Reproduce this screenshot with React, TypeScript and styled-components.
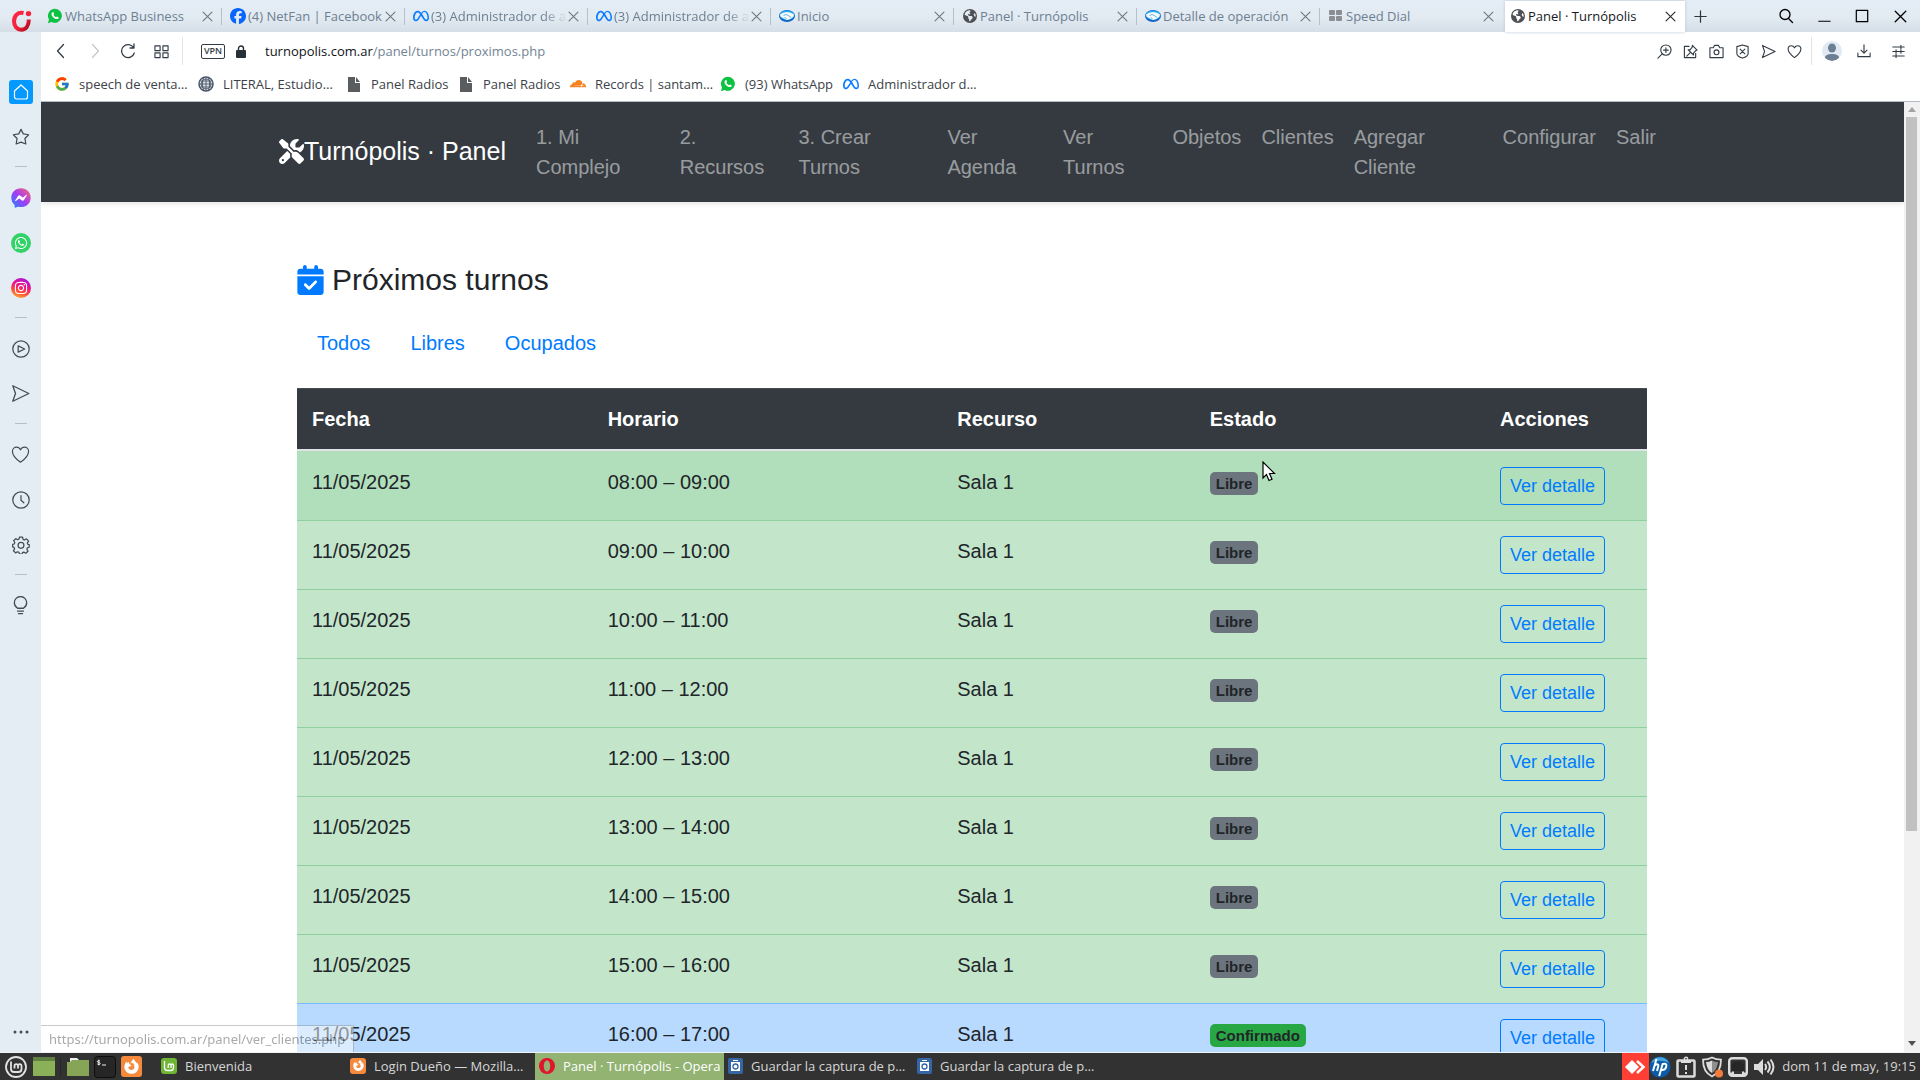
import React from "react";
import styled, { createGlobalStyle, css } from "styled-components";
import {
  FaScrewdriverWrench,
  FaCalendarCheck,
  FaMeta,
  FaFacebook,
  FaFacebookMessenger,
  FaWhatsapp,
  FaInstagram,
  FaCloudflare,
  FaFirefoxBrowser,
  FaEarthAmericas,
} from "react-icons/fa6";
import { FcGoogle } from "react-icons/fc";

const uiFont = `"Open Sans", "Noto Sans", sans-serif`;
const pageFont = `"Liberation Sans", Arial, sans-serif`;

const GlobalStyle = createGlobalStyle`
  *, *::before, *::after { box-sizing: border-box; }
  body { margin: 0; background: #e4ecf4; overflow: hidden; }
  a { text-decoration: none; }
  button { font: inherit; border: 0; padding: 0; background: none; cursor: pointer; }
  svg { display: block; flex: none; }
`;

const Desktop = styled.div`
  display: flex;
  flex-direction: column;
  height: 100vh;
  font-family: ${uiFont};
  font-size: 13px;
`;

/* ---------- tab strip ---------- */

const TabStrip = styled.header`
  display: flex;
  flex: none;
  height: 32px;
  background: linear-gradient(#e4ecf5 0%, #e2eaf2 55%, #d5dde6 100%);
`;

const MenuButton = styled.button`
  display: flex;
  width: 39px;
  height: 42px;
  flex: none;
  align-items: center;
  justify-content: center;
  padding-left: 4px;
`;

const TabList = styled.div`
  display: flex;
  flex: 1;
  min-width: 0;
`;

const Tab = styled.div<{ $active?: boolean }>`
  display: flex;
  flex: 0 1 183px;
  min-width: 0;
  align-items: center;
  padding: 0 9px 0 8px;
  color: ${(p) => (p.$active ? "#16191d" : "#6d8091")};
  position: relative;

  ${(p) =>
    p.$active
      ? css`
          background: #fff;
          flex-basis: 180px;
          margin: 1px 0 0 2px;
          padding-left: 5px;
          box-shadow: 0 0 3px #b9c7d8;
        `
      : css`
          &:not(:nth-last-child(3))::after {
            content: "";
            position: absolute;
            right: 0;
            top: 8px;
            height: 17px;
            width: 1px;
            background: #b4c0cc;
          }
        `}
`;

const TabLabel = styled.button<{ $fade?: boolean }>`
  flex: 1;
  min-width: 0;
  overflow: hidden;
  display: flex;
  align-items: center;
  gap: 2px;
  padding-bottom: 1px;
  text-align: left;
  white-space: nowrap;
  color: inherit;
  line-height: 20px;
  ${(p) => p.$fade && "mask-image: linear-gradient(90deg, #000 84%, transparent);"}
`;

const CloseButton = styled.button<{ $dark?: boolean }>`
  color: ${(p) => (p.$dark ? "#22272d" : "#6f7780")};
`;

const NewTab = styled.button`
  width: 30px;
  display: flex;
  align-items: center;
  justify-content: center;
  color: #30363d;
`;

const WindowControls = styled.div`
  display: flex;
  align-items: center;
  padding-right: 1px;
  color: #30363d;

  button {
    width: 38px;
    height: 32px;
    display: flex;
    align-items: center;
    justify-content: center;
  }
`;

/* ---------- browser body ---------- */

const BrowserBody = styled.div`
  display: flex;
  flex: 1;
  min-height: 0;
  border-bottom: 1px solid #eef2f6;
`;

const Sidebar = styled.nav`
  display: flex;
  flex-direction: column;
  align-items: center;
  flex: none;
  width: 41px;
  padding-top: 37px;
  background: #e4ecf4;
  color: #434b55;
`;

const SideButton = styled.button`
  display: flex;
  align-items: center;
  justify-content: center;
  width: 41px;
  height: 45px;
  color: inherit;
`;

const SideRule = styled.hr`
  width: 12px;
  height: 1px;
  border: 0;
  margin: 7px 0 8px;
  background: #b3bfcb;
`;

const SideTile = styled.span<{ $bg: string; $round?: boolean }>`
  display: flex;
  align-items: center;
  justify-content: center;
  width: ${(p) => (p.$round ? 20 : 24)}px;
  height: ${(p) => (p.$round ? 20 : 24)}px;
  border-radius: ${(p) => (p.$round ? "50%" : "3px")};
  background: ${(p) => p.$bg};
  color: #fff;
`;

const SideMore = styled(SideButton)`
  margin-top: auto;
  height: 40px;
`;

const Main = styled.div`
  display: flex;
  flex-direction: column;
  flex: 1;
  min-width: 0;
  background: #fff;
`;

const AddressRow = styled.div`
  display: flex;
  flex: none;
  align-items: center;
  height: 38px;
  padding: 0 4px 0 2px;
  color: #333c46;
`;

const ToolButton = styled.button<{ $w: number; $muted?: boolean }>`
  display: flex;
  align-items: center;
  justify-content: center;
  width: ${(p) => p.$w}px;
  height: 32px;
  color: ${(p) => (p.$muted ? "#c3c9cf" : "inherit")};
`;

const Divider = styled.span`
  width: 1px;
  height: 28px;
  background: #e1e4e8;
`;

const Vpn = styled.button`
  margin-left: 18px;
  width: 24px;
  height: 15px;
  border: 1px solid #333c46;
  border-radius: 2px;
  font-size: 9px;
  line-height: 12px;
  font-weight: 600;
  color: #333c46;
`;

const AddressField = styled.div`
  flex: 1;
  margin-left: 9px;
  padding-bottom: 1px;
  line-height: 20px;
  color: #738495;
  outline: none;

  b {
    font-weight: 400;
    color: #101418;
  }
`;

const Avatar = styled.button`
  width: 20px;
  height: 20px;
  margin: 0 6px 0 10px;
  border-radius: 50%;
  background: #e1eaf3;
  overflow: hidden;
`;

const Bookmarks = styled.nav`
  display: flex;
  flex: none;
  height: 32px;
  padding: 0 0 3px 13px;
  border-bottom: 1px solid #b3bcc6;
`;

const Bookmark = styled.a<{ $w: number }>`
  display: flex;
  align-items: center;
  gap: 9px;
  width: ${(p) => p.$w}px;
  white-space: nowrap;
  color: #3c4248;
`;

const IconBox = styled.span`
  display: flex;
  width: 16px;
  flex: none;
  justify-content: center;
`;

const Viewport = styled.div`
  display: flex;
  flex: 1;
  min-height: 0;
  position: relative;
`;

const Scrollbar = styled.div`
  flex: none;
  width: 16px;
  display: flex;
  flex-direction: column;
  align-items: center;
  padding: 5px 1px 6px 0;
  background: #f1f1f1;
`;

const Track = styled.div`
  flex: 1;
  align-self: stretch;
  margin: 5px 2px 8px;
`;

const Thumb = styled.div`
  height: 78%;
  background: #c1c1c1;
`;

const StatusBubble = styled.div`
  position: absolute;
  left: 0;
  bottom: 0;
  height: 27px;
  padding: 0 8px;
  border: 1px solid #8f959c;
  border-width: 1px 1px 0 0;
  background: #fff;
  color: #555;
  font-family: "Noto Sans", "Open Sans", sans-serif;
  font-size: 13px;
  line-height: 26px;
  opacity: 0.5;
`;

const Cursor = styled.svg`
  position: absolute;
  left: 1221px;
  top: 359px;
`;

/* ---------- web page ---------- */

const Page = styled.div`
  flex: 1;
  min-width: 0;
  overflow: hidden;
  font-family: ${pageFont};
  font-size: 20px;
  line-height: 30px;
  color: #212529;
`;

const Navbar = styled.nav`
  background: #343a40;
  padding: 10px 0;
  box-shadow: 0 2px 5px rgba(0, 0, 0, 0.1);
`;

const NavContainer = styled.div`
  display: flex;
  align-items: center;
  max-width: 1425px;
  margin: 0 auto;
  padding: 0 19px;
`;

const Brand = styled.a`
  display: flex;
  align-items: center;
  flex: none;
  margin-right: 20px;
  padding-bottom: 2px;
  color: #fff;
  font-size: 25px;
  line-height: 38px;
`;

const NavList = styled.ul`
  display: flex;
  flex: 1;
  min-width: 0;
  margin: 0;
  padding: 0;
  list-style: none;
`;

const NavLink = styled.a`
  display: block;
  padding: 10px;
  color: rgba(255, 255, 255, 0.5);
`;

const Content = styled.main`
  max-width: 1425px;
  margin: 0 auto;
  padding: 60px 38px 0 37px;
`;

const Title = styled.h4`
  display: flex;
  align-items: center;
  gap: 8px;
  margin: 0 0 20px;
  font-size: 30px;
  line-height: 36px;
  font-weight: 400;

  svg {
    width: 27px;
    height: 30px;
    color: #007bff;
  }
`;

const Filters = styled.div`
  display: flex;
  margin-bottom: 20px;

  a {
    padding: 10px 20px;
    color: #007bff;
  }
`;

const Table = styled.table`
  width: 100%;
  table-layout: fixed;
  border-collapse: separate;
  border-spacing: 0;
`;

const Col = styled.col<{ $w: number }>`
  width: ${(p) => p.$w}%;
`;

const HeadCell = styled.th`
  padding: 15px;
  text-align: left;
  color: #fff;
  background: #343a40;
  border-top: 1px solid #454d55;
  border-bottom: 2px solid #dee2e6;
`;

type Tone = "hover" | "free" | "taken";
const tones: Record<Tone, { bg: string; line: string }> = {
  hover: { bg: "#b1dfbb", line: "#b1dfbb" },
  free: { bg: "#c3e6cb", line: "#8fd19e" },
  taken: { bg: "#b8daff", line: "#7abaff" },
};

const Row = styled.tr<{ $tone: Tone }>`
  background: ${(p) => tones[p.$tone].bg};

  td {
    padding: 15px;
    vertical-align: top;
    border-top: 1px solid ${(p) => tones[p.$tone].line};
  }
`;

const Badge = styled.span<{ $ok?: boolean }>`
  display: inline-block;
  padding: 4px 6px;
  border-radius: 5px;
  font-size: 15px;
  line-height: 15px;
  font-weight: 700;
  background: ${(p) => (p.$ok ? "#28a745" : "#6c757d")};
`;

const DetailLink = styled.a`
  display: inline-block;
  vertical-align: middle;
  padding: 5px 9px;
  border: 1px solid #007bff;
  border-radius: 4px;
  font-size: 18px;
  line-height: 26px;
  white-space: nowrap;
  color: #007bff;
`;

/* ---------- desktop panel ---------- */

const Taskbar = styled.footer`
  display: flex;
  flex: none;
  align-items: center;
  height: 27px;
  background: #323232;
  color: #d6d6d6;
`;

const Launchers = styled.div`
  display: flex;
  align-items: center;
  gap: 5px;
  width: 157px;
  padding-left: 4px;
`;

const LauncherGap = styled.span`
  width: 1px;
  height: 18px;
  margin: 0 1px 0 0;
  background: #262626;
`;

const TaskButton = styled.button<{ $active?: boolean }>`
  display: flex;
  align-items: center;
  gap: 8px;
  flex: 0 1 189px;
  min-width: 0;
  height: 27px;
  padding: 0 0 2px 4px;
  white-space: nowrap;
  color: ${(p) => (p.$active ? "#fff" : "inherit")};
  background: ${(p) => (p.$active ? "#92b372" : "transparent")};
`;

const Tray = styled.div`
  display: flex;
  align-items: center;
  gap: 4px;
  margin-left: auto;
  padding-right: 4px;
`;

const AnyDesk = styled.button`
  display: flex;
  align-items: center;
  justify-content: center;
  width: 27px;
  height: 27px;
  margin-right: -4px;
  background: #ff3f34;
`;

const Clock = styled.time`
  margin-left: 3px;
  padding-bottom: 2px;
`;

/* ---------- drawings ---------- */

type LineProps = { size?: number; w?: number; children: React.ReactNode };
const Line = ({ size = 16, w = 1, children }: LineProps) => (
  <svg
    width={size}
    height={size}
    viewBox="0 0 16 16"
    fill="none"
    stroke="currentColor"
    strokeWidth={w}
    strokeLinecap="round"
    strokeLinejoin="round"
    aria-hidden="true"
  >
    {children}
  </svg>
);

const Cross = ({ size = 11 }: { size?: number }) => (
  <Line size={size} w={1.6}>
    <path d="M1.5 1.5l13 13M14.5 1.5l-13 13" />
  </Line>
);

const HeartPath = <path d="M8 14.500C4.500 12 1.200 9 1.200 5.400 1.200 3.200 2.800 1.800 4.600 1.800 6.200 1.800 7.400 2.800 8 4.100 8.600 2.800 9.800 1.800 11.400 1.800c1.800 0 3.400 1.400 3.400 3.600C14.800 9 11.500 12 8 14.500z" />;
const SendPath = <path d="M1.500 1.500l13.500 6.500-13.500 6.500L3.800 8z" />;

const OperaMark = () => (
  <svg width="21" height="22" viewBox="0 0 21 22" fill="none" aria-hidden="true">
    <defs>
      <linearGradient id="opera" x1="0" y1="0" x2="1" y2="1">
        <stop offset="0" stopColor="#ff2a45" />
        <stop offset="0.6" stopColor="#f01f38" />
        <stop offset="1" stopColor="#a5081c" />
      </linearGradient>
    </defs>
    <path d="M12.500 3C6.500 1.800 3 6 3 11.300c0 5 3.200 8.400 7.200 8.400 4.600 0 7.600-3.600 7.600-10.200" stroke="url(#opera)" strokeWidth="4" />
    <circle cx="17.500" cy="3.600" r="2.700" fill="#f5243d" />
  </svg>
);

const WhatsBubble = () => (
  <svg width="16" height="16" viewBox="0 0 16 16" aria-hidden="true">
    <path d="M8 .800a7 7 0 1 1-3.400 13.200L.900 15.200l1.100-3.700A7 7 0 0 1 8 .800z" fill="#0dc143" />
    <path d="M5.600 4.200c.5-.3.900 0 1.100.6l.4 1-.6.900c.5 1.200 1.400 2 2.600 2.500l.900-.8 1.600.8c.3 1.200-.7 2-1.800 1.900C7 10.900 4.600 8.400 4.500 6c0-.8.500-1.500 1.100-1.800z" fill="#fff" />
  </svg>
);

const Handshake = () => (
  <svg width="16" height="14" viewBox="0 0 16 14" aria-hidden="true">
    <ellipse cx="8" cy="7" rx="8" ry="6" fill="#1565c8" />
    <ellipse cx="8" cy="6.200" rx="7.400" ry="4.800" fill="#22a7f2" />
    <path d="M1 5.500l3-1.800 4-.7 4 .8 3 1.700-.6 2.200-3 2.300L8 11 4.600 9.600 1.500 7.500z" fill="#f4fafd" />
    <path d="M4.500 6.500l2.500-1 2 .8 3 2.200M5.500 8.500l2 1" stroke="#6db4e2" fill="none" />
  </svg>
);

const Tiles = () => (
  <svg width="14" height="12" viewBox="0 0 14 12" fill="#8b8f94" aria-hidden="true">
    <rect width="6" height="5" rx="1" />
    <rect x="7" width="6" height="5" rx="1" />
    <rect y="6" width="6" height="5" rx="1" />
    <rect x="7" y="6" width="6" height="5" rx="1" />
  </svg>
);

const PageSheet = () => (
  <svg width="13" height="15" viewBox="0 0 13 15" fill="#5a5d60" aria-hidden="true">
    <path d="M0 0h7v6h5v9H0zM8 0l4 5H8z" />
  </svg>
);

const Globe = () => (
  <svg width="16" height="16" viewBox="0 0 16 16" fill="none" stroke="#4a5568" aria-hidden="true">
    <circle cx="8" cy="8" r="7" strokeWidth="1.500" />
    <circle cx="8" cy="8" r="5" fill="#dfe4ec" />
    <path d="M8 1v14M1 8h14M2.500 5h11M2.500 11h11M5.500 2c-1.500 4-1.500 8 0 12M10.500 2c1.500 4 1.500 8 0 12" strokeWidth="0.900" />
  </svg>
);

const Person = () => (
  <svg width="20" height="20" viewBox="0 0 20 20" fill="#6d7f92" aria-hidden="true">
    <ellipse cx="10" cy="7" rx="4" ry="4.500" />
    <path d="M3 17c0-3 3-4 7-4s7 1 7 4c-2 2-4 3-7 3s-5-1-7-3z" />
  </svg>
);

const MintMenu = () => (
  <svg width="24" height="24" viewBox="0 0 24 24" fill="none" stroke="#e2e2e2" aria-hidden="true">
    <circle cx="12" cy="12" r="10" strokeWidth="1.800" />
    <path d="M7 6.500V14c0 2 1 3 3 3h4.500c2 0 3-1 3-3v-3c0-2.500-3.500-2.500-3.500 0v2.500M14 11c0-2.500-3.500-2.500-3.500 0v2.500" strokeWidth="1.800" />
  </svg>
);

const MintMark = () => (
  <svg width="12" height="12" viewBox="0 0 12 12" fill="none" stroke="#fff" strokeWidth="1.300" aria-hidden="true">
    <path d="M1.500 1v6.500c0 2 1 3 3 3h3c2 0 3-1 3-3V5.500c0-2-2.500-2-2.500 0V8M8 5.500c0-2-2.800-2-2.800 0V8" />
  </svg>
);

const GreenWindow = () => (
  <svg width="22" height="19" viewBox="0 0 22 19" aria-hidden="true">
    <rect width="22" height="19" fill="#8ab158" />
    <rect width="22" height="4" fill="#5f8040" />
  </svg>
);

const Folder = () => (
  <svg width="22" height="20" viewBox="0 0 22 20" aria-hidden="true">
    <path d="M3 1h7l2 2h7v4H3z" fill="#f2f2f2" />
    <path d="M0 5h3l2-2h17v16H0z" fill="#87a556" />
  </svg>
);

const Terminal = () => (
  <svg width="22" height="22" viewBox="0 0 22 22" fill="none" aria-hidden="true">
    <rect x="0.500" y="0.500" width="21" height="21" rx="3" fill="#262626" stroke="#0d0d0d" />
    <path d="M6 5.200c-1-.9-2.600-.6-2.600.4 0 1.300 2.800.7 2.800 2 0 1-1.900 1.300-2.900.3M4.800 3.700v5.600M8 9h4" stroke="#eee" />
  </svg>
);

const AppTile = styled.span<{ $size: number; $bg: string }>`
  display: flex;
  align-items: center;
  justify-content: center;
  flex: none;
  width: ${(p) => p.$size}px;
  height: ${(p) => p.$size}px;
  border-radius: 3px;
  color: #fff;
  background: ${(p) => p.$bg};
`;

const OperaO = () => (
  <svg width="16" height="16" viewBox="0 0 16 16" aria-hidden="true">
    <path fillRule="evenodd" fill="#e0142c" d="M8 0a8 8 0 1 0 0 16A8 8 0 0 0 8 0zm0 2.500c2 0 3.200 2.500 3.200 5.500S10 13.500 8 13.500 4.800 11 4.800 8 6 2.500 8 2.500z" />
  </svg>
);

const Camera = () => (
  <svg width="15" height="16" viewBox="0 0 15 16" aria-hidden="true">
    <rect width="15" height="16" rx="2" fill="#3465a4" />
    <rect x="3" y="4" width="9" height="9" fill="#fff" />
    <rect x="5" y="2" width="5" height="1" fill="#fff" />
    <circle cx="7.500" cy="8.500" r="2.500" fill="none" stroke="#3465a4" strokeWidth="1.300" />
  </svg>
);

const Hp = () => (
  <svg width="22" height="22" viewBox="0 0 22 22" aria-hidden="true">
    <circle cx="11" cy="11" r="10.500" fill="#0a5ba8" />
    <path d="M2 7a10 10 0 0 1 18 0C14 4 8 4 2 7z" fill="#4aa5df" />
    <path d="M7.500 3L4 15M5.800 9.500c2-1.800 4-1.400 3.500.6L8 15M13.800 7.500L10.200 20M13.600 8c3-1 4.300.2 3.600 2.800-.7 2.700-2 3.700-5 3.200" stroke="#fff" strokeWidth="2" fill="none" />
  </svg>
);

const Clipboard = () => (
  <svg width="22" height="22" viewBox="0 0 22 22" fill="none" stroke="#dcdcdc" aria-hidden="true">
    <rect x="2.500" y="4.500" width="17" height="16" rx="1" strokeWidth="2.500" />
    <circle cx="11" cy="3" r="1.700" strokeWidth="1.400" />
    <path d="M6 6h10M11 9v5M11 16v2" strokeWidth="2" />
  </svg>
);

const Shield = () => (
  <svg width="22" height="22" viewBox="0 0 22 22" aria-hidden="true">
    <path d="M11 1.500c3 1.700 6 2.200 9 2.200C20 11 17 17.500 11 20.500 5 17.500 2 11 2 3.700c3 0 6-.5 9-2.200z" fill="none" stroke="#dcdcdc" strokeWidth="1.800" />
    <path d="M11 4.500c-2 1-4 1.500-6 1.500.5 5 2.500 9 6 11z" fill="#dcdcdc" />
    <path d="M11 4.500c2 1 4 1.500 6 1.500-.5 5-2.500 9-6 11z" fill="#8f8f8f" />
    <circle cx="18" cy="17.500" r="4" fill="#f47b3b" />
  </svg>
);

const Network = () => (
  <svg width="22" height="22" viewBox="0 0 22 22" aria-hidden="true">
    <rect x="2.200" y="2.200" width="17.600" height="17.600" rx="3" fill="#323232" stroke="#dcdcdc" strokeWidth="2.400" />
    <path d="M4.500 15V7.500h2v-2h9v2h2V15z" fill="#262626" />
    <path d="M3 17.500h3v-2M19 17.500h-3v-2M4 19h14" stroke="#dcdcdc" strokeWidth="2" fill="none" />
  </svg>
);

const Volume = () => (
  <svg width="22" height="20" viewBox="0 0 22 20" fill="none" stroke="#dcdcdc" strokeWidth="2" aria-hidden="true">
    <path d="M1 7h4l5-5v16l-5-5H1z" fill="#dcdcdc" stroke="none" />
    <path d="M12 7c1.500 2 1.500 4 0 6M14.500 4.500c3 3.500 3 7.500 0 11M17.500 2.500c4 5 4 10 0 15" />
  </svg>
);

/* ---------- data ---------- */

const tabs = [
  { icon: <WhatsBubble />, label: "WhatsApp Business" },
  { icon: <FaFacebook size={16} color="#0866ff" />, label: "(4) NetFan | Facebook" },
  { icon: <FaMeta size={16} color="#0a7cff" />, label: "(3) Administrador de a", fade: true },
  { icon: <FaMeta size={16} color="#0a7cff" />, label: "(3) Administrador de a", fade: true },
  { icon: <Handshake />, label: "Inicio" },
  { icon: <FaEarthAmericas size={14} color="#4d5156" />, label: "Panel · Turnópolis" },
  { icon: <Handshake />, label: "Detalle de operación" },
  { icon: <Tiles />, label: "Speed Dial" },
  { icon: <FaEarthAmericas size={14} color="#4d5156" />, label: "Panel · Turnópolis", active: true },
];

const bookmarks = [
  { icon: <FcGoogle size={16} />, label: "speech de venta…", w: 144 },
  { icon: <Globe />, label: "LITERAL, Estudio…", w: 148 },
  { icon: <PageSheet />, label: "Panel Radios", w: 112 },
  { icon: <PageSheet />, label: "Panel Radios", w: 112 },
  { icon: <FaCloudflare size={16} color="#f6821f" />, label: "Records | santam…", w: 150 },
  { icon: <WhatsBubble />, label: "(93) WhatsApp", w: 123 },
  { icon: <FaMeta size={16} color="#0a7cff" />, label: "Administrador d…", w: 140 },
];

const menu = [
  "1. Mi Complejo",
  "2. Recursos",
  "3. Crear Turnos",
  "Ver Agenda",
  "Ver Turnos",
  "Objetos",
  "Clientes",
  "Agregar Cliente",
  "Configurar",
  "Salir",
];

const columns = [
  { name: "Fecha", w: 21.9 },
  { name: "Horario", w: 25.9 },
  { name: "Recurso", w: 18.7 },
  { name: "Estado", w: 21.5 },
  { name: "Acciones", w: 12 },
];

const pad = (n: number) => String(n).padStart(2, "0");
const slots = Array.from({ length: 9 }, (_, i) => ({
  time: `${pad(8 + i)}:00 – ${pad(9 + i)}:00`,
  tone: (i === 0 ? "hover" : i < 8 ? "free" : "taken") as Tone,
}));

export default function App() {
  return (
    <Desktop>
      <GlobalStyle />
      <TabStrip>
        <MenuButton aria-label="Opera">
          <OperaMark />
        </MenuButton>
        <TabList>
          {tabs.map((t, i) => (
            <Tab key={i} $active={t.active}>
              <TabLabel $fade={t.fade}>
                <IconBox>{t.icon}</IconBox>
                {t.label}
              </TabLabel>
              <CloseButton $dark={t.active} aria-label="Cerrar pestaña">
                <Cross />
              </CloseButton>
            </Tab>
          ))}
          <NewTab aria-label="Nueva pestaña">
            <Line size={13} w={1.5}>
              <path d="M8 1v14M1 8h14" />
            </Line>
          </NewTab>
        </TabList>
        <WindowControls>
          <button aria-label="Buscar">
            <Line w={1.3}>
              <circle cx="7" cy="6.500" r="5" />
              <path d="M10.500 10.500l4 4" />
            </Line>
          </button>
          <button aria-label="Minimizar">
            <Line size={14} w={1.3}>
              <path d="M2 14h13" />
            </Line>
          </button>
          <button aria-label="Maximizar">
            <Line size={14} w={1.4}>
              <path d="M1.500 1.500h13v13h-13z" />
            </Line>
          </button>
          <button aria-label="Cerrar">
            <Cross size={13} />
          </button>
        </WindowControls>
      </TabStrip>

      <BrowserBody>
        <Sidebar aria-label="Barra lateral">
          <SideButton aria-label="Inicio">
            <SideTile $bg="#0399ff">
              <Line size={16} w={1.2}>
                <path d="M1.500 7L8 1l6.500 6v6a2 2 0 0 1-2 2h-9a2 2 0 0 1-2-2z" />
              </Line>
            </SideTile>
          </SideButton>
          <SideButton aria-label="Favoritos">
            <Line size={18} w={1.1}>
              <path d="M8 1.200l2 4 4.800.8-3.300 3.300.8 4.900L8 12.500l-4.300 1.700.8-4.900L1.200 6 6 5.200z" />
            </Line>
          </SideButton>
          <SideRule />
          <SideButton aria-label="Messenger">
            <svg width="20" height="20" viewBox="0 0 512 512" aria-hidden="true">
              <defs>
                <linearGradient id="msn" x1="0" y1="1" x2="1" y2="0">
                  <stop offset="0" stopColor="#1a8cff" />
                  <stop offset="0.500" stopColor="#a33bf5" />
                  <stop offset="1" stopColor="#ff6b6b" />
                </linearGradient>
              </defs>
              <circle cx="256" cy="240" r="200" fill="#fff" />
              <FaFacebookMessenger size={512} fill="url(#msn)" />
            </svg>
          </SideButton>
          <SideButton aria-label="WhatsApp">
            <SideTile $round $bg="#32d366">
              <FaWhatsapp size={14} />
            </SideTile>
          </SideButton>
          <SideButton aria-label="Instagram">
            <SideTile $round $bg="linear-gradient(20deg, #ffc32b 0%, #ff4a3d 35%, #f0128a 60%, #8b1af0 100%)">
              <FaInstagram size={14} />
            </SideTile>
          </SideButton>
          <SideRule />
          <SideButton aria-label="Reproductor">
            <Line size={18} w={1.1}>
              <circle cx="8" cy="8" r="7.300" />
              <path d="M5.500 5.200l5.800 2.800-5.800 2.800z" />
            </Line>
          </SideButton>
          <SideButton aria-label="Mi Flow">
            <Line size={19} w={1.1}>
              {SendPath}
            </Line>
          </SideButton>
          <SideRule />
          <SideButton aria-label="Marcadores">
            <Line size={19} w={1}>
              {HeartPath}
            </Line>
          </SideButton>
          <SideButton aria-label="Historial">
            <Line size={18} w={1.1}>
              <circle cx="8" cy="8" r="7.300" />
              <path d="M8 4v4.200l2.500 2.300" />
            </Line>
          </SideButton>
          <SideButton aria-label="Configuración">
            <Line size={18} w={1.1}>
              <path d="M6.600 1h2.800l.4 2 1.300.6 1.800-1.100 1.900 2-1.200 1.700.5 1.200 1.200.3v2.300l-1.600.5-.5 1.300 1 1.700-1.900 1.800-1.800-1-1.100.5-.4 1.200H6.600l-.4-1.500-1.300-.5-1.700 1-1.900-1.900 1-1.700-.5-1.300-1.300-.4V7.500l1.500-.4.500-1.300-1-1.600 1.800-1.900 1.700 1 1.200-.5z" />
              <circle cx="8" cy="8.300" r="2.600" />
            </Line>
          </SideButton>
          <SideRule />
          <SideButton aria-label="Consejos">
            <Line size={19} w={1.1}>
              <path d="M5.500 10.300C3.800 9.200 2.800 7.600 2.800 5.700a5.200 5.200 0 0 1 10.400 0c0 1.900-1 3.500-2.700 4.600zM5.500 12.700h5M6.300 14.900h3.400" />
            </Line>
          </SideButton>
          <SideMore aria-label="Más">
            <svg width="16" height="4" viewBox="0 0 16 4" fill="#434b55" aria-hidden="true">
              <circle cx="2" cy="2" r="1.500" />
              <circle cx="8" cy="2" r="1.500" />
              <circle cx="14" cy="2" r="1.500" />
            </svg>
          </SideMore>
        </Sidebar>

        <Main>
          <AddressRow>
            <ToolButton $w={36} aria-label="Atrás">
              <Line w={1.3}>
                <path d="M10.500 1.500L4.500 8l6 6.500" />
              </Line>
            </ToolButton>
            <ToolButton $w={32} $muted aria-label="Adelante">
              <Line w={1.3}>
                <path d="M5.500 1.500l6 6.500-6 6.500" />
              </Line>
            </ToolButton>
            <ToolButton $w={34} aria-label="Recargar">
              <Line w={1.3}>
                <path d="M13.500 4.500A6.500 6.500 0 1 0 14.300 10M14 1v4h-4" />
              </Line>
            </ToolButton>
            <ToolButton $w={32} aria-label="Speed Dial">
              <Line size={15} w={1.2}>
                <rect x="1" y="2" width="5.500" height="5" />
                <rect x="9.500" y="2" width="5.500" height="5" />
                <rect x="1" y="9.500" width="5.500" height="5" />
                <rect x="9.500" y="9.500" width="5.500" height="5" />
              </Line>
            </ToolButton>
            <ToolButton as="span" $w={5} />
            <Divider />
            <Vpn>VPN</Vpn>
            <ToolButton $w={31} aria-label="Información del sitio">
              <svg width="10" height="13" viewBox="0 0 10 13" aria-hidden="true">
                <rect y="5" width="10" height="8" rx="1" fill="#26303a" />
                <path d="M2.500 6V3.500a2.500 2.500 0 0 1 5 0V6" fill="none" stroke="#26303a" strokeWidth="1.400" />
              </svg>
            </ToolButton>
            <AddressField
              role="textbox"
              aria-label="Dirección"
              contentEditable
              suppressContentEditableWarning
              spellCheck={false}
            >
              <b>turnopolis.com.ar</b>/panel/turnos/proximos.php
            </AddressField>
            <ToolButton $w={26} aria-label="Zoom">
              <Line size={15} w={1.2}>
                <circle cx="9.500" cy="6.500" r="5.500" />
                <path d="M5.500 10.500l-4.500 4.500M7 6.500h5M9.500 4v5" />
              </Line>
            </ToolButton>
            <ToolButton $w={26} aria-label="Pinboards">
              <Line size={15} w={1.2}>
                <path d="M6.500 2.500H1.500v12h12V10M10 1.500l5 5-1.200.4-2.600 2.800v2L5.500 6.300h2l2.300-3z M8 9l-4 4" />
              </Line>
            </ToolButton>
            <ToolButton $w={26} aria-label="Instantánea">
              <Line size={15} w={1.2}>
                <path d="M1 4h3.500L6 1.500h4L11.500 4H15v10.500H1z" />
                <circle cx="8" cy="8.800" r="2.600" />
              </Line>
            </ToolButton>
            <ToolButton $w={26} aria-label="Bloqueador">
              <Line size={15} w={1.2}>
                <path d="M8 1l6 1.800V10c0 2.500-3 4-6 5-3-1-6-2.500-6-5V2.800zM5.500 5.500l5 5M10.500 5.500l-5 5" />
              </Line>
            </ToolButton>
            <ToolButton $w={26} aria-label="Enviar a Mi Flow">
              <Line size={15} w={1.2}>
                {SendPath}
              </Line>
            </ToolButton>
            <ToolButton $w={26} aria-label="Agregar a marcadores">
              <Line size={15} w={1.2}>
                {HeartPath}
              </Line>
            </ToolButton>
            <ToolButton as="span" $w={4} />
            <Divider />
            <Avatar aria-label="Perfil">
              <Person />
            </Avatar>
            <ToolButton $w={32} aria-label="Descargas">
              <Line size={14} w={1.3}>
                <path d="M8 1v9.500M4.500 7L8 10.500 11.500 7M1 10.500v4h14v-4" />
              </Line>
            </ToolButton>
            <ToolButton $w={36} aria-label="Ajustes rápidos">
              <Line size={13} w={1.4}>
                <path d="M1 2.500h14M1 8h14M1 13.500h14M11 .500v4M5 6v4M11 6v4M5 11.500v4" />
              </Line>
            </ToolButton>
          </AddressRow>

          <Bookmarks aria-label="Marcadores">
            {bookmarks.map((b, i) => (
              <Bookmark key={i} href="#" $w={b.w}>
                <IconBox>{b.icon}</IconBox>
                {b.label}
              </Bookmark>
            ))}
          </Bookmarks>

          <Viewport>
            <Page>
              <Navbar>
                <NavContainer>
                  <Brand href="#">
                    <FaScrewdriverWrench size={25} />
                    Turnópolis · Panel
                  </Brand>
                  <NavList>
                    {menu.map((m) => (
                      <li key={m}>
                        <NavLink href="#">{m}</NavLink>
                      </li>
                    ))}
                  </NavList>
                </NavContainer>
              </Navbar>
              <Content>
                <Title>
                  <FaCalendarCheck />
                  Próximos turnos
                </Title>
                <Filters>
                  <a href="#">Todos</a>
                  <a href="#">Libres</a>
                  <a href="#">Ocupados</a>
                </Filters>
                <Table>
                  <colgroup>
                    {columns.map((c) => (
                      <Col key={c.name} $w={c.w} />
                    ))}
                  </colgroup>
                  <thead>
                    <tr>
                      {columns.map((c) => (
                        <HeadCell key={c.name} scope="col">
                          {c.name}
                        </HeadCell>
                      ))}
                    </tr>
                  </thead>
                  <tbody>
                    {slots.map((s) => (
                      <Row key={s.time} $tone={s.tone}>
                        <td>11/05/2025</td>
                        <td>{s.time}</td>
                        <td>Sala 1</td>
                        <td>
                          <Badge $ok={s.tone === "taken"}>{s.tone === "taken" ? "Confirmado" : "Libre"}</Badge>
                        </td>
                        <td>
                          <DetailLink href="#">Ver detalle</DetailLink>
                        </td>
                      </Row>
                    ))}
                  </tbody>
                </Table>
              </Content>
            </Page>
            <Scrollbar aria-hidden="true">
              <svg width="8" height="5" viewBox="0 0 8 5" fill="#a3a3a3">
                <path d="M4 0l4 5H0z" />
              </svg>
              <Track>
                <Thumb />
              </Track>
              <svg width="8" height="5" viewBox="0 0 8 5" fill="#505050">
                <path d="M0 0h8L4 5z" />
              </svg>
            </Scrollbar>
            <StatusBubble>https://turnopolis.com.ar/panel/ver_clientes.php</StatusBubble>
            <Cursor width="14" height="21" viewBox="0 0 14 21" aria-hidden="true">
              <path d="M1 1v16l3.500-3.500L7 19.500l3-1.300-2.500-5.700H12.500z" fill="#fff" stroke="#000" strokeWidth="1.200" />
            </Cursor>
          </Viewport>
        </Main>
      </BrowserBody>

      <Taskbar>
        <Launchers>
          <button aria-label="Menú">
            <MintMenu />
          </button>
          <button aria-label="Mostrar escritorio">
            <GreenWindow />
          </button>
          <LauncherGap />
          <button aria-label="Archivos">
            <Folder />
          </button>
          <button aria-label="Terminal">
            <Terminal />
          </button>
          <button aria-label="Firefox">
            <AppTile $size={21} $bg="#f58a3c">
              <FaFirefoxBrowser size={15} />
            </AppTile>
          </button>
        </Launchers>
        <TaskButton>
          <AppTile $size={16} $bg="#6fb536">
            <MintMark />
          </AppTile>
          Bienvenida
        </TaskButton>
        <TaskButton>
          <AppTile $size={16} $bg="#f58a3c">
            <FaFirefoxBrowser size={11} />
          </AppTile>
          Login Dueño — Mozilla…
        </TaskButton>
        <TaskButton $active>
          <OperaO />
          Panel · Turnópolis - Opera
        </TaskButton>
        <TaskButton>
          <Camera />
          Guardar la captura de p…
        </TaskButton>
        <TaskButton>
          <Camera />
          Guardar la captura de p…
        </TaskButton>
        <Tray>
          <AnyDesk aria-label="AnyDesk">
            <svg width="21" height="14" viewBox="0 0 21 14" aria-hidden="true">
              <path d="M7 0l7 7-7 7-7-7z" fill="#fff" />
              <path d="M12 1l6.500 6-6.500 6" fill="none" stroke="#fff" strokeWidth="2.500" />
            </svg>
          </AnyDesk>
          <Hp />
          <Clipboard />
          <Shield />
          <Network />
          <Volume />
          <Clock>dom 11 de may, 19:15</Clock>
        </Tray>
      </Taskbar>
    </Desktop>
  );
}
